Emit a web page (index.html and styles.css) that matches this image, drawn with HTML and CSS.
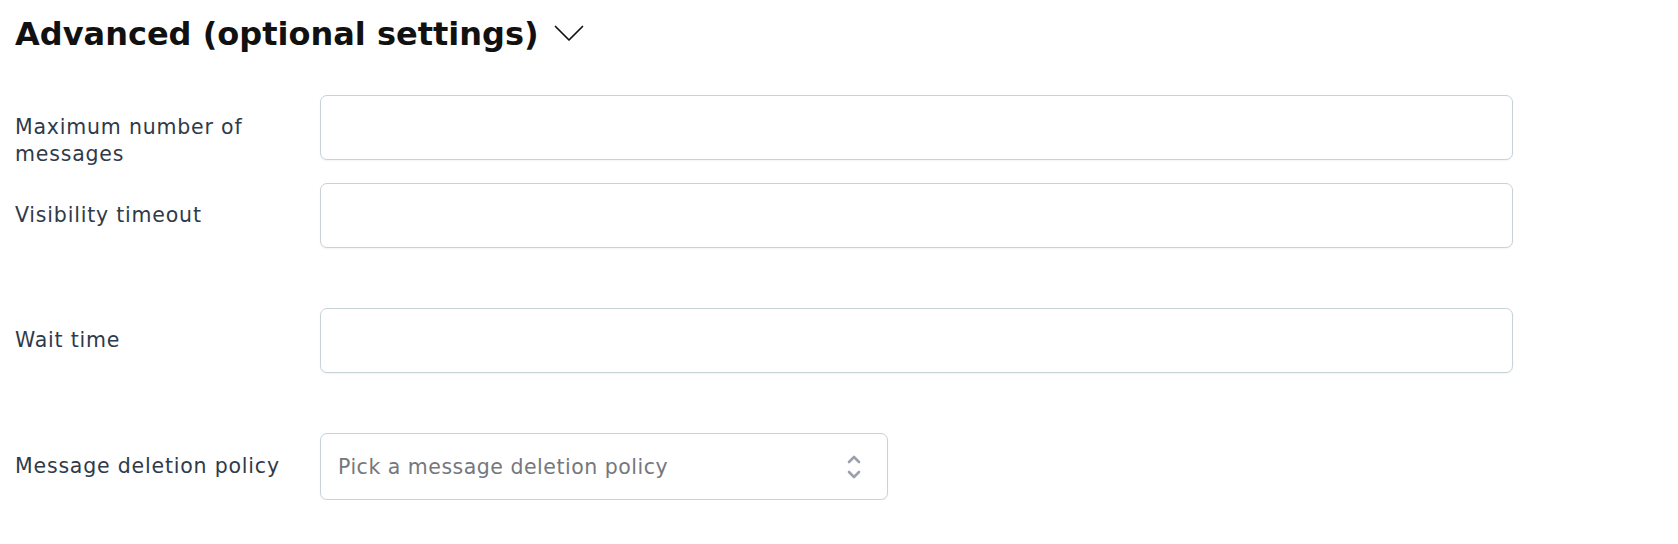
FILE: index.html
```html
<!DOCTYPE html>
<html lang="en">
<head>
<meta charset="utf-8">
<title>Advanced settings</title>
<link rel="stylesheet" href="styles.css">
</head>
<body>
<div class="page">
  <h2 class="heading">
    <span>Advanced (optional settings)</span>
    <svg class="heading-chevron" width="30" height="17" viewBox="0 0 30 17" aria-hidden="true">
      <polyline points="1.5,1.5 15,15 28.5,1.5" fill="none" stroke="#111" stroke-width="1.7" stroke-linecap="round" stroke-linejoin="round"/>
    </svg>
  </h2>

  <div class="form">
    <div class="row row-first">
      <label class="label label-top" for="max">Maximum number of<br>messages</label>
      <input class="field" id="max" type="text">
    </div>
    <div class="row row-second">
      <label class="label" for="vis">Visibility timeout</label>
      <input class="field" id="vis" type="text">
    </div>
    <div class="row row-spaced">
      <label class="label" for="wait">Wait time</label>
      <input class="field" id="wait" type="text">
    </div>
    <div class="row row-spaced">
      <span class="label">Message deletion policy</span>
      <div class="select">
        <span class="placeholder">Pick a message deletion policy</span>
        <svg class="select-icon" width="16" height="28" viewBox="0 0 16 28" aria-hidden="true">
          <polyline points="3,9 8,4 13,9" fill="none" stroke="#9aa1ad" stroke-width="2.6" stroke-linecap="round" stroke-linejoin="round"/>
          <polyline points="3,19 8,24 13,19" fill="none" stroke="#9aa1ad" stroke-width="2.6" stroke-linecap="round" stroke-linejoin="round"/>
        </svg>
      </div>
    </div>
  </div>
</div>
</body>
</html>
```

FILE: styles.css
```css
* { box-sizing: border-box; }

html, body {
  margin: 0;
  padding: 0;
  background: #ffffff;
}

body {
  font-family: "DejaVu Sans", "Noto Sans", sans-serif;
}

.page {
  padding: 0 15px;
}

.heading {
  margin: 14px 0 0 0;
  display: flex;
  align-items: center;
  gap: 15px;
  font-size: 32px;
  line-height: 40px;
  font-weight: 700;
  color: #111111;
  letter-spacing: 0;
}

.heading-chevron {
  margin-top: -2px;
}

.form {
  margin-top: 41px;
}

.row {
  display: flex;
  align-items: center;
}

.row-first {
  align-items: flex-start;
}

.row-second {
  margin-top: 23px;
}

.row-spaced {
  margin-top: 60px;
}

.label {
  width: 305px;
  flex: none;
  font-size: 20.5px;
  line-height: 27px;
  color: #2f3a4a;
  letter-spacing: 0.8px;
}

.label-top {
  margin-top: 19px;
  margin-bottom: -13px;
}

.field {
  width: 1193px;
  height: 65px;
  border: 1px solid #c8d3d7;
  border-radius: 7px;
  background: #ffffff;
  box-shadow: 0 1px 2px rgba(0, 0, 0, 0.05);
  font: inherit;
  outline: none;
  padding: 0 17px;
}

.select {
  width: 568px;
  height: 67px;
  border: 1px solid #c8d3d7;
  border-radius: 7px;
  background: #ffffff;
  box-shadow: 0 1px 2px rgba(0, 0, 0, 0.05);
  display: flex;
  align-items: center;
  justify-content: space-between;
  padding: 0 25px 0 17px;
}

.placeholder {
  font-size: 20.5px;
  color: #76777c;
  letter-spacing: 0.5px;
}

.select-icon {
  flex: none;
}
```
